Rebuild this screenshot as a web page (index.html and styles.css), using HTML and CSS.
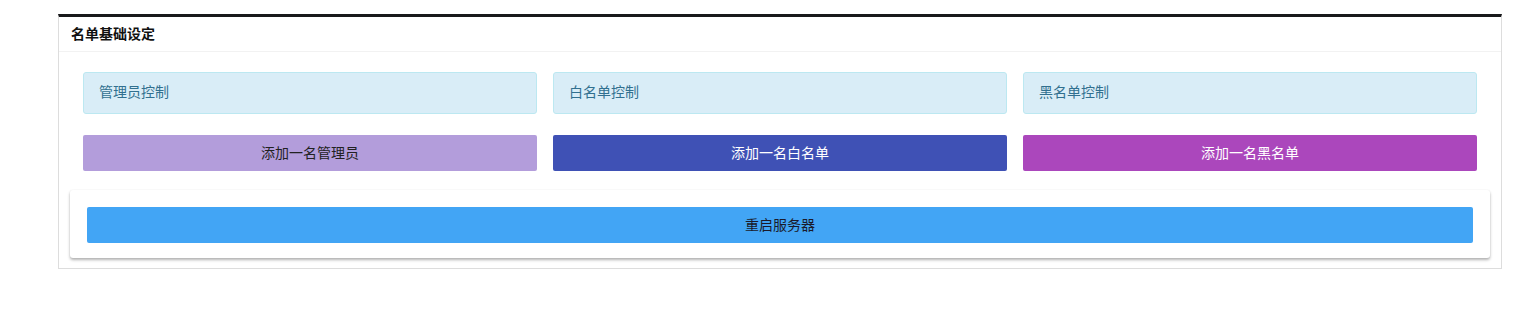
FILE: index.html
```html
<!DOCTYPE html>
<html lang="zh-CN">

<head>
    <meta charset="UTF-8">
    <meta name="viewport" content="width=device-width, initial-scale=1.0">
    <title>名单基础设定</title>
    <link rel="stylesheet" href="styles.css">
</head>

<body>
    <div class="panel">
        <div class="panel-head">名单基础设定</div>
        <div class="panel-body">
            <div class="grid">
                <div class="alert">管理员控制</div>
                <div class="alert">白名单控制</div>
                <div class="alert">黑名单控制</div>

                <button class="btn btn-admin">添加一名管理员</button>
                <button class="btn btn-white">添加一名白名单</button>
                <button class="btn btn-black">添加一名黑名单</button>
            </div>

            <div class="card">
                <button class="btn btn-restart">重启服务器</button>
            </div>
        </div>
    </div>
</body>

</html>
```

FILE: styles.css
```css
body {
    margin: 0;
    padding: 14px 31px 0 58px;
    background-color: #fff;
    font-family: "Noto Sans CJK SC", "Liberation Sans", sans-serif;
    font-size: 14px;
}

/* ------------------Panel------------------- */
.panel {
    border: 1px solid #ddd;
    border-top: 3px solid #18191b;
    background-color: #fff;
}

.panel-head {
    height: 34px;
    line-height: 33px;
    padding: 0 12px;
    font-weight: 700;
    color: #111;
    border-bottom: 1px solid #f2f2f2;
}

.panel-body {
    padding: 20px 11px 10px;
}

.grid {
    display: grid;
    grid-template-columns: repeat(3, 1fr);
    column-gap: 16px;
    row-gap: 21px;
    padding: 0 13px;
}

.alert {
    box-sizing: border-box;
    height: 42px;
    line-height: 37px;
    padding: 0 15px;
    background-color: #d9edf7;
    border: 1px solid #bce8f1;
    border-radius: 3px;
    color: #31708f;
}

/* ------------------Buttons------------------- */
.btn {
    display: block;
    width: 100%;
    height: 36px;
    padding: 0 0 3px;
    border: none;
    border-radius: 2px;
    font-family: inherit;
    font-size: 14px;
    cursor: pointer;
}

.btn-admin {
    background-color: #b39ddb;
    color: #222;
}

.btn-white {
    background-color: #3f51b5;
    color: #fff;
}

.btn-black {
    background-color: #ab47bc;
    color: #fff;
}

.card {
    margin-top: 19px;
    padding: 17px 17px 15px;
    border-radius: 3px;
    background-color: #fff;
    box-shadow: 0 2px 3px rgba(0, 0, 0, 0.3), 0 0 2px rgba(0, 0, 0, 0.06);
}

.btn-restart {
    background-color: #42a5f5;
    color: #1a1a2a;
}
```
